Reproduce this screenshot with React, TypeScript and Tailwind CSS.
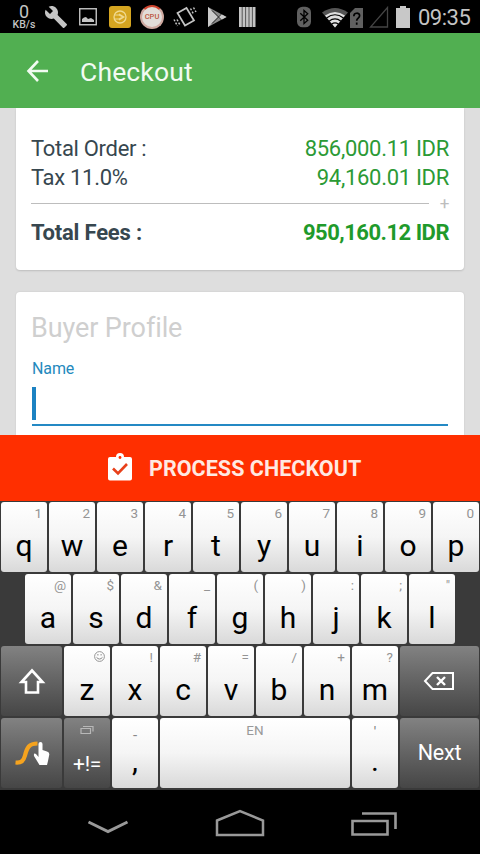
import { JSX, ReactNode } from "react";

const lightKey = "rounded-[3px] bg-gradient-to-b from-white via-[#f5f5f5] to-[#d9d9d9]";
const darkKey = "rounded-[3px] bg-gradient-to-b from-[#828282] to-[#464646] text-white";

const topRow = ["q1", "w2", "e3", "r4", "t5", "y6", "u7", "i8", "o9", "p0"];
const homeRow = ["a@", "s$", "d&", "f_", "g(", "h)", "j:", "k;", 'l"'];
const bottomRow = ["x!", "c#", "v=", "b/", "n+", "m?"];

function LetterKey({ letter, hint }: { letter: string; hint: ReactNode }): JSX.Element {
  return (
    <div className={`${lightKey} flex h-[70px] w-[46px] shrink-0 flex-col items-center`}>
      <div className="flex h-6 w-full items-center justify-end pr-[5px] text-[13.5px] leading-none text-[#949494]">
        {hint}
      </div>
      <div className="text-[30px] leading-[40px] text-black">{letter}</div>
    </div>
  );
}

function StatusBar(): JSX.Element {
  return (
    <div className="flex h-[33px] items-center bg-black text-[#c4c4c4]">
      <div className="ml-[11px] flex h-[33px] w-[26px] flex-col items-center">
        <span className="mt-[4px] text-[18px] leading-[15px]">0</span>
        <span className="mt-px text-[10.5px] font-medium leading-[9px]">KB/s</span>
      </div>
      <svg className="ml-[7px]" width="24" height="24" viewBox="0 0 24 24" fill="currentColor">
        <path d="M22.7 19l-9.1-9.1c.9-2.3.4-5-1.5-6.9-2-2-5-2.4-7.4-1.3L9 6 6 9 1.6 4.700C.4 7.100.9 10.100 2.900 12.100c1.900 1.900 4.600 2.400 6.900 1.500l9.100 9.100c.4.4 1 .4 1.400 0l2.300-2.300c.5-.4.500-1.100.1-1.400z" />
      </svg>
      <svg className="ml-[11px]" width="18" height="18" viewBox="0 0 18 18">
        <rect x="0.75" y="0.75" width="16.5" height="16" fill="none" stroke="currentColor" strokeWidth="1.4" />
        <path d="M3 14v-3l2-1.500 2-.5 2 2 3-1 3 2V14z" fill="currentColor" />
      </svg>
      <svg className="ml-3" width="22" height="22" viewBox="0 0 22 22">
        <rect width="22" height="22" rx="3" fill="#d5a520" />
        <circle cx="11" cy="11" r="6" fill="none" stroke="#f0da90" strokeWidth="1.3" />
        <path d="M6 9h4l4 2-4 2H6M10 8l5 3-5 3" fill="none" stroke="#f0da90" strokeWidth="1.1" />
      </svg>
      <div className="ml-[9px] flex h-6 w-6 items-center justify-center rounded-full border-2 border-[#cfa9a0] border-t-[#d0452f] bg-[#e2ddd8] text-[7.5px] font-medium text-[#bd5640]">
        CPU
      </div>
      <svg className="ml-[9px]" width="24" height="24" viewBox="0 0 24 24" fill="none" stroke="currentColor">
        <path d="M4.500 8l9-5 7.500 12.500-9 5z" strokeWidth="1.700" />
        <path d="M17.500 3.500l3 5.500M20.500 2.500l2.500 4.500M1 14.500l3.500 6.500M4 14.500l3 5.500" strokeWidth="1.500" strokeDasharray="2 1.500" />
      </svg>
      <svg className="ml-[10px]" width="20" height="20" viewBox="0 0 20 20">
        <path d="M1 0L19.500 10 1 20z" fill="#8c8c8c" />
        <path d="M1 0l10.500 10L1 20z" fill="#cacaca" />
        <path d="M14 7l5.500 3-5.500 3-3-3z" fill="#cacaca" />
        <path d="M5 3.500l9.500 9.500M5 16.500L14.500 7" fill="none" stroke="#1c1c1c" strokeWidth="1" />
      </svg>
      <svg className="ml-[12px]" width="17" height="20" viewBox="0 0 17 20">
        <path d="M0 0h16.500v20H0z" fill="#c4c4c4" />
        <path d="M3.200 0v20M6.600 0v20M10 0v20M13.400 0v20" stroke="#4a4a4a" strokeWidth="0.900" />
      </svg>
      <svg className="ml-[41px]" width="14" height="22" viewBox="0 0 15 22">
        <rect width="15" height="22" rx="6" fill="#606060" />
        <path d="M3.500 7l8 7.500-4 3.500V4l4 3.500-8 7.500" fill="none" stroke="#000" strokeWidth="1.400" />
      </svg>
      <svg className="ml-[11px] mt-0.5" width="26" height="20" viewBox="0 0 26 20">
        <path d="M0 4.500Q13-4.500 26 4.500L13 19.500z" fill="#555" />
        <path d="M3 7.500Q13 .5 23 7.500L13 19.500z" fill="#e0e0e0" />
        <path d="M4.500 10Q13 3.500 21.500 10M7 13.200Q13 8.500 19 13.200M9.500 16.200Q13 13.500 16.500 16.200" fill="none" stroke="#000" strokeWidth="1.200" />
      </svg>
      <svg className="ml-[2px] mt-0.5" width="13" height="20" viewBox="0 0 13 20">
        <path d="M5 0h8v20H0V5z" fill="#606060" />
        <path d="M3.800 8.300c0-4 5.800-4 5.800-.6 0 2.300-2.900 2.400-2.900 5M6.700 14.500v2.200" fill="none" stroke="#000" strokeWidth="1.700" />
      </svg>
      <svg className="ml-[6px]" width="20" height="22" viewBox="0 0 20 22">
        <path d="M18.500 1.500v19.500H1.500z" fill="none" stroke="#444" strokeWidth="1.300" />
      </svg>
      <svg className="ml-[7px]" width="14" height="22" viewBox="0 0 14 22" fill="#c8c8c8">
        <path d="M4 0h6v2h4v20H0V2h4z" />
      </svg>
      <span className="ml-2 mt-[2px] text-[22px] leading-none tracking-[-0.500px]">09:35</span>
    </div>
  );
}

function Keyboard(): JSX.Element {
  return (
    <div className="flex h-[289px] flex-col gap-0.5 bg-[#3a3a3a] px-px pt-px">
      <div className="flex gap-0.5">
        {topRow.map((k) => (
          <LetterKey key={k} letter={k[0]} hint={k[1]} />
        ))}
      </div>
      <div className="flex gap-0.5 pl-6">
        {homeRow.map((k) => (
          <LetterKey key={k} letter={k[0]} hint={k[1]} />
        ))}
      </div>
      <div className="flex gap-0.5">
        <div className={`${darkKey} flex h-[70px] w-[61px] items-center justify-center`}>
          <svg width="28" height="26" viewBox="0 0 28 26" fill="none" stroke="white" strokeWidth="2.600">
            <path d="M14 2.500L24.500 14H20v10.500H8V14H3.500z" />
          </svg>
        </div>
        <LetterKey
          letter="z"
          hint={
            <svg className="mb-1" width="11" height="11" viewBox="0 0 11 11" fill="none" stroke="#8a8a8a">
              <circle cx="5.500" cy="5.500" r="4.900" strokeWidth="0.900" />
              <path d="M2.500 6.300q3 3.500 6 0M3.900 3v1.500M7.100 3v1.500" />
            </svg>
          }
        />
        {bottomRow.map((k) => (
          <LetterKey key={k} letter={k[0]} hint={k[1]} />
        ))}
        <div className={`${darkKey} flex h-[70px] flex-1 items-center justify-center`}>
          <svg className="mr-0.5" width="32" height="20" viewBox="0 0 32 20" fill="none" stroke="white" strokeWidth="2">
            <path d="M9.500 2H30v16H9.500L2 10z" />
            <path d="M14 6l8 8M22 6l-8 8" strokeWidth="2.400" />
          </svg>
        </div>
      </div>
      <div className="flex gap-0.5">
        <div className={`${darkKey} flex h-[70px] w-[61px] items-center justify-center`}>
          <svg width="36" height="26" viewBox="0 0 36 26">
            <path d="M1.500 22.500c6 .5 8-1.500 9.500-7 2-8 4-12 12.500-12" fill="none" stroke="#f5a31f" strokeWidth="4.200" />
            <path d="M24.500 4q0-2 2-2t2 2v6l4.500 1.500q2.500.8 2.300 3L34 21l-1 4h-7.500L20 16q-.6-3.500 2-2l2.500 3z" fill="white" />
          </svg>
        </div>
        <div className={`${darkKey} flex h-[70px] w-[46px] flex-col items-center`}>
          <svg className="mt-[7px]" width="14" height="10" viewBox="0 0 14 10" fill="none" stroke="#b8b8b8" strokeWidth="1.200">
            <path d="M1 3.500h9.500v5H1zM3 1.500h10v5" />
          </svg>
          <span className="mt-[15px] text-[21px] leading-[28px] tracking-[-0.300px]">+!=</span>
        </div>
        <div className={`${lightKey} flex h-[70px] w-[46px] flex-col items-center`}>
          <span className="h-6 pt-2 text-[15px] leading-[18px] text-[#888]">-</span>
          <span className="text-[30px] leading-[38px] text-black">,</span>
        </div>
        <div className={`${lightKey} h-[70px] w-[190px] text-center text-[13.5px] leading-6 text-[#999]`}>EN</div>
        <div className={`${lightKey} flex h-[70px] w-[46px] flex-col items-center`}>
          <span className="h-6 pt-1 text-[14px] leading-[20px] text-[#777]">'</span>
          <span className="text-[30px] leading-[38px] text-black">.</span>
        </div>
        <div className={`${darkKey} flex h-[70px] flex-1 items-center justify-center text-[21.5px] tracking-[-0.200px]`}>
          Next
        </div>
      </div>
    </div>
  );
}

export default function App(): JSX.Element {
  return (
    <main className="flex h-[854px] w-[480px] flex-col overflow-hidden bg-[#dedede] font-[Roboto,sans-serif]">
      <StatusBar />
      <header className="flex h-[75px] items-center bg-[#51af51] text-[#f2fbf2]">
        <svg className="ml-[26px]" width="24" height="24" viewBox="0 0 24 24" fill="none" stroke="currentColor" strokeWidth="2.600">
          <path d="M22 12H3M12 2L2.500 12l9.500 10" />
        </svg>
        <h1 className="ml-[30px] mt-[3px] text-[26.5px] tracking-[0.150px]">Checkout</h1>
      </header>

      <div className="flex h-[327px] flex-col gap-[22px] px-4">
        <section className="h-[162px] shrink-0 rounded-b-[4px] bg-white px-[15px] pt-[26px] text-[22px] leading-[29px] tracking-[-0.300px] text-[#37474f] shadow-[0_1px_2px_rgba(0,0,0,0.15)]">
          <div className="flex justify-between">
            <span>Total Order :</span>
            <span className="text-[#2b9a35]">856,000.11 IDR</span>
          </div>
          <div className="flex justify-between">
            <span>Tax 11.0%</span>
            <span className="text-[#2b9a35]">94,160.01 IDR</span>
          </div>
          <div className="flex h-[26px] items-center justify-between">
            <div className="mb-1 h-px w-[398px] bg-[#bdbdbd]" />
            <span className="mb-[3px] text-[17px] text-[#bdbdbd]">+</span>
          </div>
          <div className="flex justify-between font-bold">
            <span className="tracking-[-0.200px]">Total Fees :</span>
            <span className="tracking-[-0.500px] text-[#1f9a2b]">950,160.12 IDR</span>
          </div>
        </section>

        <section className="h-[143px] shrink-0 rounded-t-[4px] bg-white px-4 pt-5 shadow-[0_0_2px_rgba(0,0,0,0.12)]">
          <h2 className="-ml-px text-[27px] leading-8 tracking-[-0.100px] text-[#cfcfcf]">Buyer Profile</h2>
          <div className="mt-[15px] text-[16px] leading-5 tracking-[-0.100px] text-[#2489bd]">Name</div>
          <div className="mt-2 h-[39px] border-b-2 border-[#2489c4]">
            <div className="h-[33px] w-1 bg-[#1c82c2]" />
          </div>
        </section>
      </div>

      <button className="flex h-[66px] items-center bg-[#ff2f00] pl-[107px] text-[21.500px] font-bold text-[#ffe9e2]">
        <svg className="mb-0.5" width="26" height="28" viewBox="0 0 26 28">
          <path d="M3 4h6a4 4 0 0 1 8 0h6a2 2 0 0 1 2 2v19.500a2 2 0 0 1-2 2H3a2 2 0 0 1-2-2V6a2 2 0 0 1 2-2z" fill="white" />
          <circle cx="13" cy="4.500" r="1.400" fill="#ff2f00" />
          <path d="M6 15.500l5 5 9-9.500" fill="none" stroke="#e8401a" strokeWidth="2.600" />
        </svg>
        <span className="ml-4 mt-[3px] tracking-[0.050px]">PROCESS CHECKOUT</span>
      </button>

      <Keyboard />

      <nav className="flex h-16 items-center bg-black">
        <svg className="ml-[87px] mt-[10px]" width="42" height="16" viewBox="0 0 42 16" fill="none" stroke="#999" strokeWidth="3">
          <path d="M1.500 3L21 12.500 40.500 3" />
        </svg>
        <svg className="ml-[86px] mt-0.5" width="50" height="30" viewBox="0 0 50 30" fill="none" stroke="#999" strokeWidth="2.500">
          <path d="M2 12.500L25 3l23 9.500V27H2z" />
        </svg>
        <svg className="ml-[85px] mt-1" width="48" height="26" viewBox="0 0 48 26" fill="none" stroke="#999" strokeWidth="2.600">
          <path d="M2.500 10h35v13.500h-35zM12 2.500h33.500V18" />
        </svg>
      </nav>
    </main>
  );
}
